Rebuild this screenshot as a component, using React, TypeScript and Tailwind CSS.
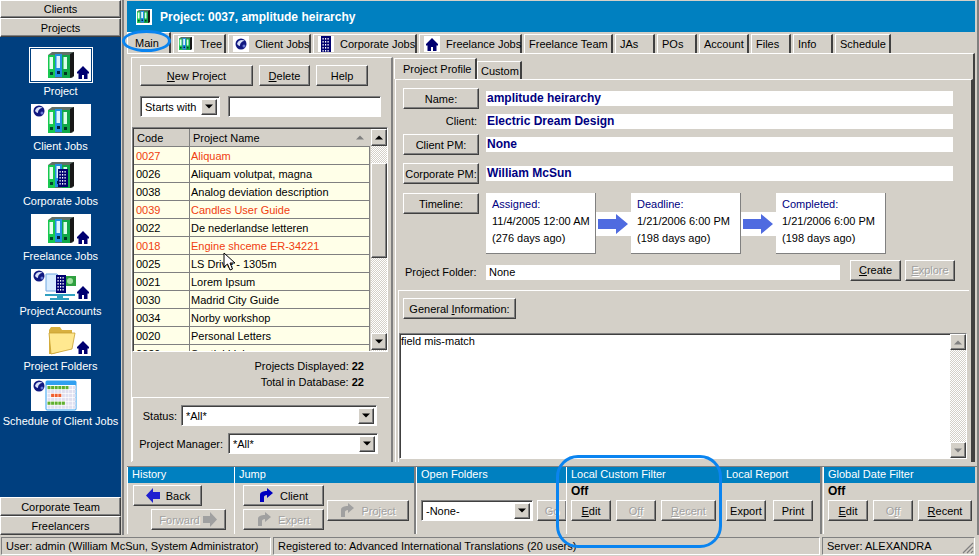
import type { ReactNode } from "react";

const raised =
  "border border-t-white border-l-white border-r-[#404040] border-b-[#404040] shadow-[inset_-1px_-1px_0_#808080]";
const sunken =
  "border border-t-[#808080] border-l-[#808080] border-r-white border-b-white shadow-[inset_1px_1px_0_#404040]";
const dither = "bg-[repeating-conic-gradient(#d4d0c8_0_25%,#ffffff_0_50%)] bg-[length:2px_2px]";
const disabled = "text-[#a0a0a0] [text-shadow:1px_1px_0_#ffffff]";

function Btn({
  className = "",
  h = "h-[21px]",
  off = false,
  children,
}: {
  className?: string;
  h?: string;
  off?: boolean;
  children: ReactNode;
}) {
  return (
    <div
      className={`${raised} ${h} shrink-0 flex items-center justify-center whitespace-nowrap bg-[#d4d0c8] ${off ? disabled : "text-black"} ${className}`}
    >
      {children}
    </div>
  );
}

function Caret({ up = false, light = false }: { up?: boolean; light?: boolean }) {
  return (
    <svg width="8" height="5" viewBox="0 0 8 5">
      <path d={up ? "M4 0.5 L8 4.5 L0 4.5Z" : "M0 0.5 L8 0.5 L4 4.5Z"} fill={light ? "#808080" : "#000"} />
    </svg>
  );
}

function ScrollBtn({ up = false, light = false, className = "" }: { up?: boolean; light?: boolean; className?: string }) {
  return (
    <div className={`${raised} flex items-center justify-center bg-[#d4d0c8] ${className}`}>
      <Caret up={up} light={light} />
    </div>
  );
}

function Select({ value, className = "" }: { value: string; className?: string }) {
  return (
    <div className={`${sunken} h-[21px] shrink-0 flex items-center bg-white pl-[4px] pr-[2px] ${className}`}>
      <span className="flex-1 whitespace-nowrap overflow-hidden">{value}</span>
      <ScrollBtn className="w-[16px] h-[16px]" />
    </div>
  );
}

function Binders({ x = 17, y = 3, s = 1 }: { x?: number; y?: number; s?: number }) {
  return (
    <g transform={`translate(${x} ${y}) scale(${s})`}>
      <path d="M0 3 L4 0 H26 V24 L24 26 H0Z" fill="#607068" />
      <path d="M22 2 L26 0 V24 L22 26Z" fill="#181818" />
      <rect x="0" y="3" width="7" height="23" fill="#18c850" />
      <rect x="1.5" y="5" width="3.5" height="12" fill="#e8fff0" />
      <rect x="2" y="20" width="3" height="3" fill="#043" />
      <rect x="7" y="2" width="7" height="23" fill="#2090e0" />
      <rect x="8.5" y="4" width="3.5" height="12" fill="#e0f4ff" />
      <rect x="9" y="19" width="3" height="3" fill="#024" />
      <rect x="14" y="3" width="8" height="23" fill="#10a848" />
      <rect x="15.5" y="5" width="3.5" height="12" fill="#d8ffe8" />
      <rect x="16" y="20" width="3" height="3" fill="#032" />
    </g>
  );
}

function House({ x = 46, y = 17 }: { x?: number; y?: number }) {
  return (
    <path
      transform={`translate(${x} ${y})`}
      d="M6 0 L12 6 V7.5 H10.5 V13 H7 V9 H5 V13 H1.5 V7.5 H0 V6Z"
      fill="#000070"
    />
  );
}

function Globe({ x = 2, y = 1 }: { x?: number; y?: number }) {
  return (
    <g transform={`translate(${x} ${y})`}>
      <circle cx="6" cy="6" r="5.5" fill="#101880" />
      <path d="M2 6 C3 2 7 1 10 3 C7 3 5 5 5 8 C4 8 3 7 2 6Z" fill="#d8e0f8" />
      <circle cx="9" cy="8" r="1.5" fill="#6878d0" />
    </g>
  );
}

function Building({ x = 0, y = 0 }: { x?: number; y?: number }) {
  const dots = [];
  for (let r = 0; r < 5; r++) {
    for (let c = 0; c < 3; c++) {
      dots.push(<rect key={`${r}-${c}`} x={x + 1.5 + c * 2.5} y={y + 2 + r * 3} width="1.2" height="1.6" fill="#fff" />);
    }
  }
  return (
    <g>
      <rect x={x} y={y} width="10" height="18" fill="#000070" />
      {dots}
    </g>
  );
}

function FolderArt() {
  return (
    <g>
      <path d="M18 6 L20 3 H29 L31 6 H41 V24 L22 30 H18Z" fill="#d8b040" />
      <path d="M18 9 H44 L41 25 L20 30 Z" fill="#ffe890" stroke="#c8a030" strokeWidth="0.8" />
    </g>
  );
}

function CalendarArt() {
  const cells = [];
  for (let r = 0; r < 6; r++) {
    for (let c = 0; c < 8; c++) {
      let fill = "#e0e0f0";
      if (r === 0 && c < 6) fill = "#60b030";
      if (r === 2 && c > 0 && c < 4) fill = "#f06030";
      if (r === 4 && c < 5) fill = "#60b030";
      cells.push(<rect key={`${r}-${c}`} x={16.5 + c * 3.6} y={7 + r * 3.9} width="3" height="3.2" fill={fill} />);
    }
  }
  return (
    <g>
      <rect x="15" y="2" width="30" height="29" rx="1" fill="#fff" stroke="#30a0f0" />
      <rect x="15" y="2" width="30" height="4" fill="#30a0f0" />
      {cells}
    </g>
  );
}

function AccountsArt() {
  return (
    <g>
      <path d="M15 5 H26 L30 9 V22 H15Z" fill="#d8ecff" stroke="#70a8e0" />
      <rect x="33" y="7" width="12" height="10" fill="#30a040" />
      <circle cx="39" cy="12" r="3" fill="#a0e0a0" />
      <Building x={25} y={6} />
      <path d="M14 25 H44 V27 H32 V29 H38 V31 H19 V29 H26 V27 H14Z" fill="#30a0c0" />
    </g>
  );
}

function NavItem({ label, selected = false, art }: { label: string; selected?: boolean; art: ReactNode }) {
  return (
    <div className="h-[55px] flex flex-col items-center">
      <div className={selected ? "border border-white p-px bg-[#003f7f] -mt-[2px] -mb-[2px]" : ""}>
        <svg width="60" height="32" viewBox="0 0 60 32" className="bg-white block">
          {art}
        </svg>
      </div>
      <div className="mt-[1px] text-white text-center whitespace-nowrap">{label}</div>
    </div>
  );
}

function Sidebar() {
  return (
    <div className="w-[121px] shrink-0 flex flex-col">
      <Btn h="h-[18px]" className="w-[121px]">Clients</Btn>
      <Btn h="h-[19px]" className="w-[121px]">Projects</Btn>
      <div className="h-[460px] bg-[#003f7f] pt-[12px]">
        <NavItem selected label="Project" art={<><Binders /><House /></>} />
        <NavItem label="Client Jobs" art={<><Globe /><Binders /></>} />
        <NavItem label="Corporate Jobs" art={<><Binders /><Building x={27} y={10} /></>} />
        <NavItem label="Freelance Jobs" art={<><Binders /><House /></>} />
        <NavItem label="Project Accounts" art={<><Globe /><AccountsArt /><House /></>} />
        <NavItem label="Project Folders" art={<><FolderArt /><House /></>} />
        <NavItem label="Schedule of Client Jobs" art={<><Globe /><CalendarArt /></>} />
      </div>
      <Btn h="h-[19px]" className="w-[121px]">Corporate Team</Btn>
      <Btn h="h-[19px]" className="w-[121px]">Freelancers</Btn>
    </div>
  );
}

const tabs: { label: string; w: string; icon?: ReactNode }[] = [
  { label: "Tree", w: "w-[53px]", icon: <Binders x={1} y={1} s={0.5} /> },
  { label: "Client Jobs", w: "w-[83px]", icon: <Globe x={2} y={2} /> },
  { label: "Corporate Jobs", w: "w-[104px]", icon: <Building x={3} y={0} /> },
  { label: "Freelance Jobs", w: "w-[103px]", icon: <House x={2} y={2} /> },
  { label: "Freelance Team", w: "w-[89px]" },
  { label: "JAs", w: "w-[40px]" },
  { label: "POs", w: "w-[40px]" },
  { label: "Account", w: "w-[50px]" },
  { label: "Files", w: "w-[40px]" },
  { label: "Info", w: "w-[40px]" },
  { label: "Schedule", w: "w-[56px]" },
];

function TopTabs() {
  return (
    <div className="h-[20px] flex items-end gap-[2px] shrink-0">
      <div className="w-[44px] h-[21px] border-t border-l border-t-white border-l-white border-r-2 border-r-[#404040] pl-[7px] pt-[1px]">
        Main
      </div>
      {tabs.map((t) => (
        <div
          key={t.label}
          className={`${t.w} h-[19px] flex items-center gap-[6px] pl-[4px] whitespace-nowrap border-t border-l border-t-white border-l-white border-r-2 border-r-[#404040]`}
        >
          {t.icon && (
            <svg width="16" height="16" viewBox="0 0 16 16" className="bg-white shrink-0">
              {t.icon}
            </svg>
          )}
          <span>{t.label}</span>
        </div>
      ))}
    </div>
  );
}

const projects = [
  ["0027", "Aliquam", true],
  ["0026", "Aliquam volutpat, magna", false],
  ["0038", "Analog deviation description", false],
  ["0039", "Candles User Guide", true],
  ["0022", "De nederlandse letteren", false],
  ["0018", "Engine shceme ER-34221", true],
  ["0025", "LS Drive - 1305m", false],
  ["0021", "Lorem Ipsum", false],
  ["0030", "Madrid City Guide", false],
  ["0034", "Norby workshop", false],
  ["0020", "Personal Letters", false],
  ["0029", "Spatial Links", false],
] as const;

function ProjectGrid() {
  return (
    <div className={`${sunken} mt-[10px] w-[256px] h-[225px] flex overflow-hidden`}>
      <div className="w-[237px] ml-px mt-px overflow-hidden">
        <div className="h-[18px] flex bg-[#d4d0c8] border-b border-b-[#808080]">
          <div className="w-[56px] pl-[3px] border-r border-r-[#808080]">Code</div>
          <div className="flex-1 pl-[3px] flex items-center justify-between pr-[6px]">
            <span>Project Name</span>
            <Caret up light />
          </div>
        </div>
        {projects.map(([code, name, late]) => (
          <div
            key={code}
            className={`h-[18px] shrink-0 flex bg-[#ffffe8] border-b border-r border-[#808080] ${late ? "text-[#f04010]" : "text-black"}`}
          >
            <div className="w-[56px] pl-[2px] border-r border-r-[#808080]">{code}</div>
            <div className="flex-1 pl-[1px] whitespace-nowrap">{name}</div>
          </div>
        ))}
      </div>
      <div className={`w-[16px] ml-px mt-px flex flex-col ${dither}`}>
        <ScrollBtn up className="h-[17px] shrink-0" />
        <div className="h-[17px] shrink-0" />
        <div className={`${raised} h-[95px] shrink-0 bg-[#d4d0c8]`} />
        <div className="flex-1" />
        <ScrollBtn className="h-[17px] shrink-0 mb-[1px]" />
      </div>
    </div>
  );
}

function LeftPane() {
  return (
    <div className="w-[262px] h-[405px] shrink-0 mt-[3px] border-t border-l border-r-2 border-t-white border-l-white border-r-[#808080] flex flex-col">
      <div className="flex pl-[8px] pt-[7px] gap-[6px]">
        <Btn className="w-[113px]"><span><u>N</u>ew Project</span></Btn>
        <Btn className="w-[51px]"><span><u>D</u>elete</span></Btn>
        <Btn className="w-[52px]">Help</Btn>
      </div>
      <div className="flex pl-[8px] mt-[10px] gap-[8px]">
        <Select value="Starts with" className="w-[80px]" />
        <div className={`${sunken} w-[153px] h-[21px] bg-white`} />
      </div>
      <ProjectGrid />
      <div className="mt-[3px] pr-[27px] text-right leading-[16px] h-[42px] pt-[3px]">
        <div>Projects Displayed: <b>22</b></div>
        <div>Total in Database: <b>22</b></div>
      </div>
      <div className="border-t border-l border-t-white border-l-white h-[64px] mr-[2px] flex flex-col gap-[7px] pt-[7px]">
        <div className="flex items-center">
          <span className="w-[44px] text-right">Status:</span>
          <Select value="*All*" className="w-[196px] ml-[4px]" />
        </div>
        <div className="flex items-center">
          <span className="w-[90px] text-right whitespace-nowrap">Project Manager:</span>
          <Select value="*All*" className="w-[150px] ml-[5px]" />
        </div>
      </div>
    </div>
  );
}

function Field({ label, button = true, value, className = "" }: { label: string; button?: boolean; value: string; className?: string }) {
  return (
    <div className={`flex items-center ${className}`}>
      {button ? (
        <Btn className="w-[76px]">{label}</Btn>
      ) : (
        <div className="w-[76px] text-right pr-[2px]">{label}</div>
      )}
      <div className="ml-[7px] w-[467px] h-[15px] bg-white pl-px font-bold text-[12px] leading-[14px] text-[#000080]">
        {value}
      </div>
    </div>
  );
}

function DateBox({ title, date, ago }: { title: string; date: string; ago: string }) {
  return (
    <div className="w-[110px] h-[61px] bg-white border-r border-b border-r-[#808080] border-b-[#808080] pl-[6px] pt-[3px] leading-[17px] shrink-0 whitespace-nowrap">
      <div className="text-[#000080]">{title}</div>
      <div>{date}</div>
      <div>{ago}</div>
    </div>
  );
}

function Arrow() {
  return (
    <svg width="35" height="24" viewBox="0 0 35 24" className="bg-white shrink-0">
      <path d="M2 7 H20 V2 L32 12 L20 22 V17 H2Z" fill="#4f6be0" />
    </svg>
  );
}

function RightPane() {
  return (
    <div className="flex-1 flex flex-col pl-[1px] pt-[4px] min-w-0">
      <div className="flex items-end h-[21px] shrink-0">
        <div className="w-[83px] h-[21px] border-t border-l border-t-white border-l-white border-r-2 border-r-[#404040] pl-[8px] pt-[1px] whitespace-nowrap">
          Project Profile
        </div>
        <div className="w-[45px] h-[18px] border-t border-l border-t-white border-l-white border-r-2 border-r-[#404040] pl-[3px]">
          Custom
        </div>
      </div>
      <div className="w-[578px] ml-[1px] h-[383px] border-t border-l border-r-2 border-t-white border-l-white border-r-[#404040] flex flex-col">
        <div className="pl-[7px] pt-[8px]">
          <Field label="Name:" value="amplitude heirarchy" />
          <Field label="Client:" button={false} value="Electric Dream Design" className="mt-[3px]" />
          <Field label="Client PM:" value="None" className="mt-[4px]" />
          <Field label="Corporate PM:" value="William McSun" className="mt-[8px]" />
          <div className="flex mt-[9px] items-start">
            <Btn className="w-[76px]">Timeline:</Btn>
            <div className="ml-[7px] flex items-center">
              <DateBox title="Assigned:" date="11/4/2005 12:00 AM" ago="(276 days ago)" />
              <Arrow />
              <DateBox title="Deadline:" date="1/21/2006 6:00 PM" ago="(198 days ago)" />
              <Arrow />
              <DateBox title="Completed:" date="1/21/2006 6:00 PM" ago="(198 days ago)" />
            </div>
          </div>
          <div className="flex items-center mt-[5px]">
            <div className="w-[76px] pl-[2px] whitespace-nowrap mt-[4px]">Project Folder:</div>
            <div className="ml-[7px] w-[354px] h-[15px] bg-white pl-[3px] leading-[15px] mt-[4px]">None</div>
            <Btn className="ml-[10px] w-[51px]"><span><u>C</u>reate</span></Btn>
            <Btn off className="ml-[4px] w-[50px]"><span><u>E</u>xplore</span></Btn>
          </div>
        </div>
        <div className="mt-[9px] mx-[2px] border-t border-t-white flex-1 flex flex-col border-l border-l-white">
          <div className="h-[42px] pl-[4px] pt-[7px] shrink-0">
            <Btn className="w-[113px]"><span>General <u>I</u>nformation:</span></Btn>
          </div>
          <div className={`${sunken} flex-1 bg-white flex mb-[3px] mr-[2px]`}>
            <div className="flex-1 pl-px leading-[15px]">field mis-match</div>
            <div className={`w-[16px] flex flex-col justify-between ${dither}`}>
              <ScrollBtn up light className="h-[16px]" />
              <ScrollBtn light className="h-[16px]" />
            </div>
          </div>
        </div>
      </div>
    </div>
  );
}

function Group({ title, className = "", children }: { title: string; className?: string; children: ReactNode }) {
  return (
    <div className={`h-[67px] shrink-0 border-l border-l-white flex flex-col ${className}`}>
      <div className="h-[16px] bg-[#0080c0] text-white pl-[4px] leading-[15px] shrink-0 whitespace-nowrap">{title}</div>
      {children}
    </div>
  );
}

function ArrowIcon({ color, flip = false }: { color: string; flip?: boolean }) {
  return (
    <svg width="16" height="15" viewBox="0 0 16 15" className="shrink-0">
      <path transform={flip ? "matrix(-1 0 0 1 16 0)" : undefined} d="M1 4 H8 V0 L15 7.5 L8 15 V11 H1Z" fill={color} />
    </svg>
  );
}

function JumpIcon({ color }: { color: string }) {
  return (
    <svg width="15" height="15" viewBox="0 0 15 15" className="shrink-0">
      <path d="M1 14 V7 C1 4 4 3 8 3 V0 L14 5 L8 10 V7 C6 7 5 8 5 9 V14Z" fill={color} />
    </svg>
  );
}

function BottomBar() {
  return (
    <div className="flex h-[67px] mt-[4px] shrink-0 border-t border-t-[#808080]">
      <Group title="History" className="w-[107px]">
        <div className="pl-[5px] pt-[2px]">
          <Btn className="w-[69px] gap-[5px]"><ArrowIcon color="#2020d0" flip /><span>Back</span></Btn>
          <Btn off className="w-[75px] ml-[18px] mt-[3px] gap-[2px]"><span>Forward</span><ArrowIcon color="#a0a0a0" /></Btn>
        </div>
      </Group>
      <Group title="Jump" className="w-[182px] border-r-2 border-r-[#808080]">
        <div className="flex pl-[8px] pt-[2px]">
          <div>
            <Btn className="w-[81px] gap-[6px]"><JumpIcon color="#0000c0" /><span>Client</span></Btn>
            <Btn off className="w-[81px] mt-[3px] gap-[6px]"><JumpIcon color="#a0a0a0" /><span>Expert</span></Btn>
          </div>
          <Btn off className="w-[82px] ml-[3px] mt-[15px] gap-[6px]"><JumpIcon color="#a0a0a0" /><span>Project</span></Btn>
        </div>
      </Group>
      <Group title="Open Folders" className="w-[150px] overflow-hidden">
        <div className="flex pl-[4px] pt-[17px] gap-[4px]">
          <Select value="-None-" className="w-[112px]" />
          <Btn off className="w-[30px]">Go</Btn>
        </div>
      </Group>
      <Group title="Local Custom Filter" className="w-[156px]">
        <div className="pl-[4px] h-[17px] font-bold text-[12px] leading-[16px]">Off</div>
        <div className="flex pl-[4px] gap-[5px]">
          <Btn className="w-[40px]"><span><u>E</u>dit</span></Btn>
          <Btn off className="w-[40px]"><span>O<u>f</u>f</span></Btn>
          <Btn off className="w-[55px]"><span><u>R</u>ecent</span></Btn>
        </div>
      </Group>
      <Group title="Local Report" className="w-[100px] border-l-0 pl-0 border-r-2 border-r-[#808080]">
        <div className="flex pl-[4px] pt-[17px] gap-[7px]">
          <Btn className="w-[40px]">Export</Btn>
          <Btn className="w-[40px]">Print</Btn>
        </div>
      </Group>
      <Group title="Global Date Filter" className="w-[152px] ml-px">
        <div className="pl-[4px] h-[17px] font-bold text-[12px] leading-[16px]">Off</div>
        <div className="flex pl-[4px] gap-[5px]">
          <Btn className="w-[40px]"><span><u>E</u>dit</span></Btn>
          <Btn off className="w-[40px]"><span>O<u>f</u>f</span></Btn>
          <Btn className="w-[54px]"><span><u>R</u>ecent</span></Btn>
        </div>
      </Group>
    </div>
  );
}

function StatusBar() {
  const cell = "h-[18px] border border-t-[#808080] border-l-[#808080] border-r-white border-b-white pl-[4px] leading-[16px] shrink-0 whitespace-nowrap overflow-hidden";
  return (
    <div className="flex gap-[2px] mt-[2px] pl-px">
      <div className={`${cell} w-[270px]`}>User: admin (William McSun, System Administrator)</div>
      <div className={`${cell} w-[547px]`}>Registered to: Advanced International Translations (20 users)</div>
      <div className={`${cell} w-[153px] flex items-center justify-between`}>
        <span>Server: ALEXANDRA</span>
        <svg width="12" height="12" viewBox="0 0 12 12" className="self-end">
          <path d="M11 1 L1 11 M11 5 L5 11 M11 9 L9 11" stroke="#808080" strokeWidth="1.2" />
        </svg>
      </div>
    </div>
  );
}

export default function App() {
  return (
    <div className="relative w-[979px] h-[556px] overflow-hidden bg-[#d4d0c8] text-black font-['Liberation_Sans',sans-serif] text-[11px] leading-[18px]">
      <div className="flex h-[535px]">
        <Sidebar />
        <div className="flex-1 flex flex-col ml-px border-l-2 border-l-[#808080] border-r-2 border-r-[#808080] min-w-0 pl-[3px] pt-px">
          <div className="w-[848px] h-[31px] shrink-0 bg-[#0080c0] flex items-center pl-[9px] gap-[8px]">
            <svg width="16" height="16" viewBox="0 0 16 16" className="bg-white">
              <Binders x={1} y={1} s={0.5} />
            </svg>
            <span className="text-white font-bold text-[12px]">Project: 0037, amplitude heirarchy</span>
          </div>
          <div className="pt-px">
            <TopTabs />
          </div>
          <div className="w-[848px] h-[409px] shrink-0 border-t border-t-white border-r-2 border-r-[#404040] pl-[4px] flex">
            <LeftPane />
            <RightPane />
          </div>
          <BottomBar />
        </div>
      </div>
      <StatusBar />
      {/* hand drawn highlights over the screenshot */}
      <div className="absolute left-[122px] top-[30px] w-[49px] h-[22px] rounded-[50%] border-[3px] border-[#0a84f0]" />
      <div className="absolute left-[556px] top-[455px] w-[166px] h-[93px] rounded-[22px] border-[3px] border-[#0a84f0]" />
      <svg className="absolute left-[223px] top-[252px]" width="14" height="20" viewBox="0 0 14 20">
        <path d="M1 1 V15 L4.5 12 L7 18 L9.5 17 L7 11 H12Z" fill="#fff" stroke="#000" />
      </svg>
    </div>
  );
}
